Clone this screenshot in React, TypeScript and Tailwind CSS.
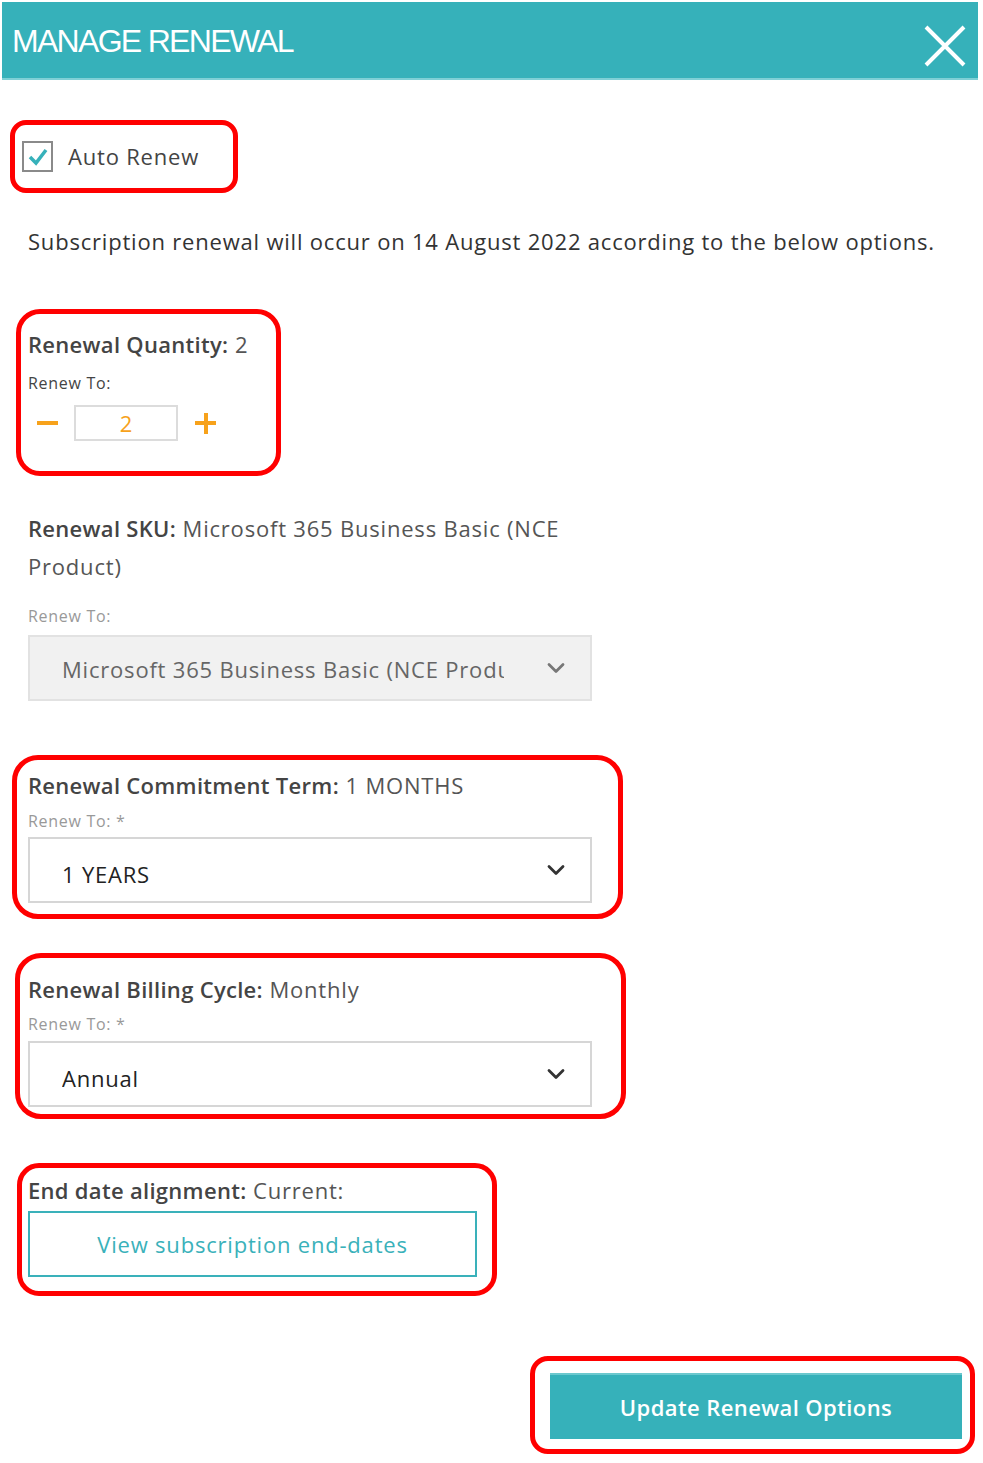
import React from 'react';
import { ChevronDown } from 'lucide-react';

const font = { fontFamily: '"Open Sans", Lato, sans-serif' };

const Chevron = ({ light }: { light?: boolean }) => (
  <ChevronDown size={28} strokeWidth={2.4} className={light ? 'text-[#777]' : 'text-[#333]'} />
);

const Select = ({ value, disabled }: { value: string; disabled?: boolean }) => (
  <div
    className={`flex items-center justify-between w-[564px] h-[66px] border-2 pl-[32px] pr-[20px] ${
      disabled ? 'bg-[#f1f1f1] border-[#e2e2e2]' : 'bg-white border-[#d6d6d6]'
    }`}
  >
    <span
      className={`text-[22px] tracking-[0.8px] whitespace-nowrap overflow-hidden ${
        disabled ? 'text-[#666] w-[442px] pt-[2px]' : 'text-[#222] pt-[8px]'
      }`}
    >
      {value}
    </span>
    <Chevron light={disabled} />
  </div>
);

const Label = ({ k, v }: { k: string; v: string }) => (
  <p className="text-[22px] leading-[30px] text-[#555] tracking-[0.8px]">
    <span className="font-semibold text-[#444] tracking-[0.3px]">{k}</span> {v}
  </p>
);

const Small = ({ children, dark }: { children: React.ReactNode; dark?: boolean }) => (
  <p className={`text-[16px] leading-[20px] tracking-[0.7px] ${dark ? 'text-[#444]' : 'text-[#999]'}`}>{children}</p>
);

const App = () => {
  return (
    <div className="bg-white w-[983px] h-[1463px] pt-[2px]" style={font}>
      <header className="ml-[2px] w-[976px] h-[78px] bg-[#36b1ba] border-b-2 border-[#7fd0d6] flex items-center justify-between pl-[10px] pr-[12px]">
        <h1
          className="text-white text-[32px] tracking-[-1.7px] pt-[2px]"
          style={{ fontFamily: '"Liberation Sans", Arial, sans-serif' }}
        >
          MANAGE RENEWAL
        </h1>
        <svg width="42" height="42" viewBox="0 0 42 42" className="mt-[12px]">
          <path d="M2 2 L40 40 M40 2 L2 40" stroke="white" strokeWidth="4" />
        </svg>
      </header>

      <div className="ml-[10px] mt-[40px] w-[228px] h-[73px] border-[5px] border-[#ff0000] rounded-[16px] flex items-center pl-[7px] gap-[15px]">
        <span className="w-[31px] h-[31px] border-2 border-[#8a8a8a] flex items-center justify-center">
          <svg width="20" height="18" viewBox="0 0 20 18">
            <path d="M2 9 L8 15 L18 2" fill="none" stroke="#36b1ba" strokeWidth="3.5" />
          </svg>
        </span>
        <span className="text-[22px] tracking-[0.8px] text-[#444]">Auto Renew</span>
      </div>

      <p className="ml-[28px] mt-[33px] text-[22px] leading-[30px] tracking-[0.8px] text-[#333]">
        Subscription renewal will occur on 14 August 2022 according to the below options.
      </p>

      <div className="ml-[16px] mt-[53px] w-[265px] h-[167px] border-[5px] border-[#ff0000] rounded-[24px] pl-[7px] pt-[15px]">
        <Label k="Renewal Quantity:" v="2" />
        <div className="mt-[14px]">
          <Small dark>Renew To:</Small>
        </div>
        <div className="mt-[12px] flex items-center">
          <span className="ml-[9px] w-[21px] h-[4px] bg-[#f7a21b]" />
          <div className="ml-[16px] w-[104px] h-[36px] border-2 border-[#dcdcdc] flex items-center justify-center text-[22px] text-[#f7a21b]">
            2
          </div>
          <span className="ml-[17px] relative w-[21px] h-[21px]">
            <span className="absolute left-0 top-[8.5px] w-[21px] h-[4px] bg-[#f7a21b]" />
            <span className="absolute top-0 left-[8.5px] w-[4px] h-[21px] bg-[#f7a21b]" />
          </span>
        </div>
      </div>

      <div className="ml-[28px] mt-[33px]">
        <p className="text-[22px] leading-[38px] text-[#555] tracking-[0.8px]">
          <span className="font-semibold text-[#444] tracking-[0.3px]">Renewal SKU:</span> Microsoft 365 Business Basic (NCE
          <br />
          Product)
        </p>
        <div className="mt-[21px]">
          <Small>Renew To:</Small>
        </div>
        <div className="mt-[9px]">
          <Select value="Microsoft 365 Business Basic (NCE Product)" disabled />
        </div>
      </div>

      <div className="ml-[12px] mt-[54px] w-[611px] h-[164px] border-[5px] border-[#ff0000] rounded-[26px] pl-[11px] pt-[10px]">
        <Label k="Renewal Commitment Term:" v="1 MONTHS" />
        <div className="mt-[11px]">
          <Small>Renew To: *</Small>
        </div>
        <div className="mt-[6px]">
          <Select value="1 YEARS" />
        </div>
      </div>

      <div className="ml-[15px] mt-[34px] w-[611px] h-[166px] border-[5px] border-[#ff0000] rounded-[26px] pl-[8px] pt-[16px]">
        <Label k="Renewal Billing Cycle:" v="Monthly" />
        <div className="mt-[10px]">
          <Small>Renew To: *</Small>
        </div>
        <div className="mt-[7px]">
          <Select value="Annual" />
        </div>
      </div>

      <div className="ml-[17px] mt-[44px] w-[480px] h-[133px] border-[5px] border-[#ff0000] rounded-[22px] pl-[6px] pt-[7px]">
        <Label k="End date alignment:" v="Current:" />
        <button className="mt-[6px] w-[449px] h-[66px] border-2 border-[#3ab1ba] text-[22px] tracking-[0.8px] text-[#3ab1ba]">
          View subscription end-dates
        </button>
      </div>

      <div className="ml-[530px] mt-[60px] w-[445px] h-[98px] border-[5px] border-[#ff0000] rounded-[18px] pl-[15px] pt-[12px]">
        <button className="w-[412px] h-[66px] bg-[#36b1ba] border-t-2 border-[#6cc8ce] text-white text-[22px] font-semibold tracking-[0.4px]">
          Update Renewal Options
        </button>
      </div>
    </div>
  );
};

export default App;
